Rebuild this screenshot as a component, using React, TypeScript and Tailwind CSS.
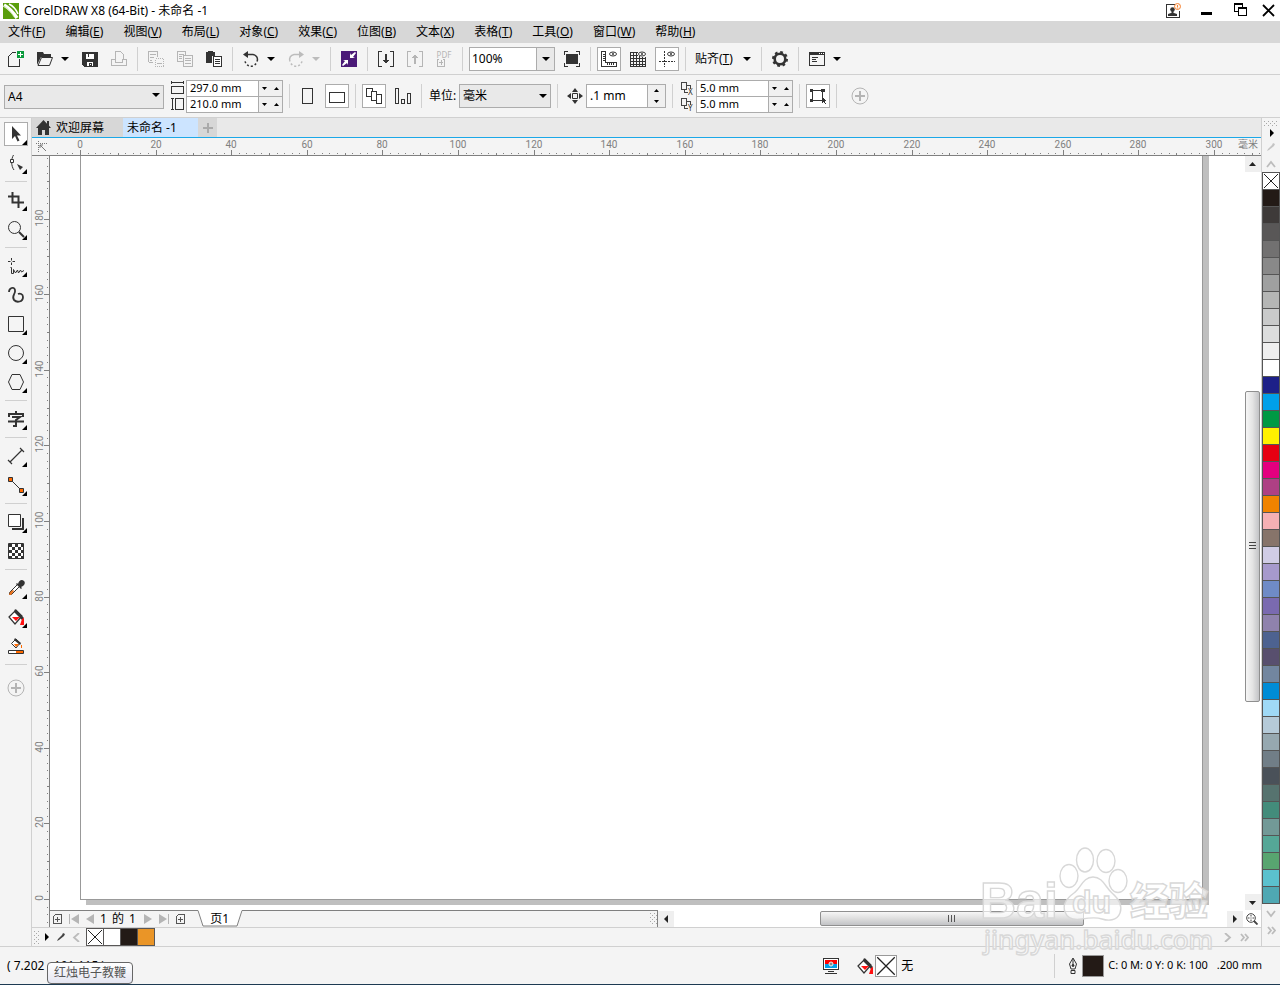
import React, { useState } from 'react';

const PALETTE = [
  '#231a16', '#3e3a39', '#595757', '#727171', '#898989', '#9fa0a0', '#b5b6b5', '#c9caca', '#dcdddd', '#efefef',
  '#ffffff', '#1d2088', '#00a0e9', '#009944', '#fff100', '#e60012', '#e4007f', '#ae4084', '#f08300', '#f4b0b4',
  '#87746a', '#d0cce5', '#a699cc', '#6f8bc6', '#7a6ab0', '#8f82ad', '#4d6290', '#584f6e', '#72869f', '#008cd6',
  '#9fd9f6', '#b5cad8', '#96a8b0', '#717e87', '#4a5159', '#56736f', '#438c7b', '#729997', '#55a797', '#58a570',
  '#5bc1ce', '#4fa8b3',
];

const MENUS: [string, string][] = [
  ['文件', 'F'], ['编辑', 'E'], ['视图', 'V'], ['布局', 'L'], ['对象', 'C'], ['效果', 'C'],
  ['位图', 'B'], ['文本', 'X'], ['表格', 'T'], ['工具', 'O'], ['窗口', 'W'], ['帮助', 'H'],
];

const PX_PER_MM = 3.78;

interface IconProps {
  children: React.ReactNode;
  size?: number;
  crisp?: boolean;
}

function Icon({ children, size = 16, crisp = true }: IconProps) {
  return (
    <svg
      width={size}
      height={size}
      viewBox={`0 0 ${size} ${size}`}
      fill="none"
      stroke="#333"
      shapeRendering={crisp ? 'crispEdges' : 'auto'}
      className="shrink-0"
    >
      {children}
    </svg>
  );
}

interface ToolButtonProps {
  label: string;
  active?: boolean;
  disabled?: boolean;
  children: React.ReactNode;
}

function ToolButton({ label, active, disabled, children }: ToolButtonProps) {
  return (
    <button
      type="button"
      aria-label={label}
      disabled={disabled}
      className={`flex h-6 w-6 shrink-0 items-center justify-center ${active ? 'border border-[#acacac] bg-white' : ''}`}
    >
      {children}
    </button>
  );
}

function Caret({ color = '#000' }: { color?: string }) {
  return (
    <svg width="8" height="4" viewBox="0 0 8 4" className="shrink-0">
      <path d="M0 0h8L4 4z" fill={color} />
    </svg>
  );
}

function CaretButton({ label, color }: { label: string; color?: string }) {
  return (
    <button type="button" aria-label={label} className="-ml-[5px] flex h-6 w-4 shrink-0 items-center justify-center">
      <Caret color={color} />
    </button>
  );
}

function Divider() {
  return (
    <div className="flex h-6 w-[3px] shrink-0 justify-center">
      <div className="h-6 w-px bg-[#d0d0d0]" />
    </div>
  );
}

function Combo({ label, value, className }: { label: string; value: string; className: string }) {
  return (
    <div className={`relative shrink-0 ${className}`}>
      <select
        aria-label={label}
        className="h-6 w-full appearance-none border border-[#acacac] bg-[#e9e9e9] pl-[3px] text-xs leading-5 outline-none"
      >
        <option>{value}</option>
      </select>
      <span className="pointer-events-none absolute top-[10px] right-1">
        <Caret />
      </span>
    </div>
  );
}

function SmallTriangle({ up }: { up?: boolean }) {
  return (
    <svg width="5" height="3" viewBox="0 0 5 3">
      <path d={up ? 'M0 3h5L2.500 0z' : 'M0 0h5L2.500 3z'} fill="#000" />
    </svg>
  );
}

function SpinRow({ label, value, last }: { label: string; value: string; last?: boolean }) {
  return (
    <div className={`flex h-[17px] w-[97px] border border-[#acacac] ${last ? '-mt-px' : ''}`}>
      <input aria-label={label} defaultValue={value} className="w-[71px] bg-white pl-[3px] text-[11px] outline-none" />
      <div className="flex flex-1 items-center justify-around border-l border-[#acacac] bg-[#f0f0f0]">
        <button type="button" aria-label={`${label} -`}>
          <SmallTriangle />
        </button>
        <button type="button" aria-label={`${label} +`}>
          <SmallTriangle up />
        </button>
      </div>
    </div>
  );
}

function TitleBar() {
  return (
    <header className="flex h-[21px] items-center bg-white pr-[5px] pl-[3px]">
      <svg width="16" height="16" viewBox="0 0 16 16" fill="none">
        <rect width="16" height="16" fill="#5a9e0c" />
        <path d="M1 2C6 5 10 9 14 15" stroke="#fff" strokeWidth="3.500" />
        <path d="M6 1c4 2 7 5 9 10" stroke="#fff" strokeWidth="1.600" />
        <path d="M1 3c4 3 7 6 10 11" stroke="#b9dc92" strokeWidth=".8" />
      </svg>
      <h1 className="ml-[5px] flex-1 text-xs">CorelDRAW X8 (64-Bit) - 未命名 -1</h1>
      <button type="button" aria-label="登录" className="mr-4">
        <svg width="16" height="16" viewBox="0 0 16 16">
          <path d="M10 1.500H1.500v13h13V8" fill="#fff" stroke="#333" shapeRendering="crispEdges" />
          <circle cx="7.500" cy="6.500" r="2.300" fill="#333" />
          <path d="M6.500 8h2v3h-2zM3 13v-2l3-1h3l3 1v2z" fill="#333" />
          <circle cx="12.500" cy="3.500" r="3" fill="#fff3e8" stroke="#f58233" />
          <path d="M12.500 2v2M12.500 4.500v1" stroke="#f58233" />
        </svg>
      </button>
      <button type="button" aria-label="最小化" className="mr-5">
        <Icon>
          <path d="M4 9h11v3H4z" fill="#000" stroke="none" />
        </Icon>
      </button>
      <button type="button" aria-label="还原" className="mr-[13px]">
        <Icon>
          <path d="M5 8.500H1.500v-8h8V4M1 1.500h9" stroke="#000" />
          <path d="M5.500 4.500h8v8h-8zM5 5.500h9" stroke="#000" />
        </Icon>
      </button>
      <button type="button" aria-label="关闭">
        <svg width="13" height="16" viewBox="0 0 13 16" fill="none" stroke="#000" strokeWidth="1.800">
          <path d="M1 2l11 11M12 2L1 13" />
        </svg>
      </button>
    </header>
  );
}

function MenuBar() {
  return (
    <nav className="flex h-[22px] items-center gap-5 bg-[#d7d7d7] pl-2">
      {MENUS.map(([name, key]) => (
        <button key={name} type="button" className="text-xs whitespace-nowrap">
          {name}(<u>{key}</u>)
        </button>
      ))}
    </nav>
  );
}

function Eye() {
  return (
    <g shapeRendering="auto">
      <ellipse cx="12" cy="3" rx="3.500" ry="2" fill="#fff" />
      <circle cx="12" cy="3" r="1" fill="#333" stroke="none" />
    </g>
  );
}

function StandardBar() {
  return (
    <div className="flex h-8 items-center gap-[5px] border-b border-[#d0d0d0] pl-1">
      <ToolButton label="新建">
        <Icon>
          <path d="M8 1.500H4.500L.5 5.500v10h11V8" />
          <path d="M9 0h7v7H9z" fill="#0a9a3c" stroke="none" />
          <path d="M10 3.500h5M12.500 1v5" stroke="#fff" />
        </Icon>
      </ToolButton>
      <ToolButton label="打开">
        <Icon crisp={false}>
          <path d="M0 14V1h6l1 2h7v3H4z" fill="#333" stroke="none" />
          <path d="M4.500 6.500h11l-3 8H1z" fill="#f4f4f4" />
        </Icon>
      </ToolButton>
      <CaretButton label="最近打开" />
      <ToolButton label="保存">
        <Icon>
          <path d="M0 1h16v15H2l-2-2z" fill="#333" stroke="none" />
          <path d="M4 3h8v5H4zM5 11h6v4H5z" fill="#fff" stroke="none" />
          <path d="M6.500 3v3M7 12h2v2H7z" />
        </Icon>
      </ToolButton>
      <ToolButton label="打印" disabled>
        <Icon>
          <path d="M4.500 9V.5h5l3 3V9M.5 8.500h4v3h7v-3h4v6H.5z" stroke="#b5b5b5" />
        </Icon>
      </ToolButton>
      <Divider />
      <ToolButton label="剪切" disabled>
        <Icon>
          <path d="M.5 11V.5h9V6M.5 11.500h4M2 3.500h6M2 6.500h4M2 9.500h2" stroke="#b5b5b5" />
          <path d="M7.500 7.500h8v8h-8z" stroke="#b5b5b5" strokeDasharray="1 1" />
          <path d="M9 12.500h5" stroke="#b5b5b5" />
        </Icon>
      </ToolButton>
      <ToolButton label="复制" disabled>
        <Icon>
          <path d="M6 10.500H.5V.5h8V4M2 3.500h5M2 5.500h3M2 7.500h3" stroke="#b5b5b5" />
          <path d="M6.500 4.500h9v11h-9zM8 7.500h6M8 9.500h6M8 12.500h6" stroke="#b5b5b5" />
        </Icon>
      </ToolButton>
      <ToolButton label="粘贴">
        <Icon>
          <path d="M0 1h2V0h5v1h2v4H6v7H0z" fill="#333" stroke="none" />
          <path d="M7.500 5.500h8v10h-8z" fill="#fff" />
          <path d="M9 8.500h5M9 10.500h5M9 12.500h5" />
        </Icon>
      </ToolButton>
      <Divider />
      <ToolButton label="撤消">
        <Icon crisp={false}>
          <path d="M4 3.500h6a5 5 0 0 1 4 7" strokeWidth="1.500" />
          <path d="M13 12.500a6 6 0 0 1-11-3" strokeDasharray="2 2" strokeWidth="1.500" />
          <path d="M0 3.500L5 0v7z" fill="#333" stroke="none" />
        </Icon>
      </ToolButton>
      <CaretButton label="撤消列表" />
      <ToolButton label="重做" disabled>
        <Icon crisp={false}>
          <path d="M12 3.500H6a5 5 0 0 0-4 7" stroke="#bcbcbc" strokeWidth="1.500" />
          <path d="M3 12.500a6 6 0 0 0 11-3" stroke="#bcbcbc" strokeDasharray="2 2" strokeWidth="1.500" />
          <path d="M16 3.500L11 0v7z" fill="#bcbcbc" stroke="none" />
        </Icon>
      </ToolButton>
      <CaretButton label="重做列表" color="#bcbcbc" />
      <Divider />
      <ToolButton label="搜索内容">
        <Icon crisp={false}>
          <path d="M0 0h16v16H0z" fill="#4b1a78" stroke="none" />
          <path d="M9 2v5h5l-2-1 3-4-1-1-4 3zM7 14V9H2l2 1-3 4 1 1 4-3z" fill="#fff" stroke="none" />
        </Icon>
      </ToolButton>
      <Divider />
      <ToolButton label="导入">
        <Icon>
          <path d="M4 .5H.5v15H4M12 .5h3.500v15H12" />
          <path d="M7 3h2v6h2l-3 4-3-4h2z" fill="#333" stroke="none" />
        </Icon>
      </ToolButton>
      <ToolButton label="导出" disabled>
        <Icon>
          <path d="M4 .5H.5v15H4M12 .5h3.500v15H12" stroke="#b5b5b5" />
          <path d="M7 13h2V7h2L8 3 5 7h2z" fill="#b5b5b5" stroke="none" />
        </Icon>
      </ToolButton>
      <ToolButton label="发布为 PDF" disabled>
        <span className="flex flex-col items-start text-[#b5b5b5]">
          <span className="text-[8px] leading-[8px]">PDF</span>
          <svg width="8" height="8" viewBox="0 0 8 8" fill="none" stroke="#b5b5b5" shapeRendering="crispEdges">
            <path d="M2 .5H.5v7h7v-7H6M4 1v5M2 3.500h4" />
          </svg>
        </span>
      </ToolButton>
      <Divider />
      <div className="flex h-6 w-[86px] shrink-0 border border-[#acacac] bg-white">
        <input aria-label="缩放级别" defaultValue="100%" className="w-[66px] pl-[2px] text-xs outline-none" />
        <button
          type="button"
          aria-label="缩放列表"
          className="flex flex-1 items-center justify-center border-l border-[#acacac] bg-[#e9e9e9]"
        >
          <Caret />
        </button>
      </div>
      <ToolButton label="全屏预览">
        <Icon>
          <path d="M2 3h12v10H2z" fill="#333" stroke="none" />
          <path d="M.5 4V.5H4M12 .5h3.500V4M15.500 12v3.500H12M4 15.500H.5V12" />
        </Icon>
      </ToolButton>
      <Divider />
      <ToolButton label="显示标尺" active>
        <Icon>
          <path d="M.5.5h4v11h11v4H.5zM2 3.500h2M2 5.500h2M2 7.500h2M2 9.500h2M6.500 12v2M8.500 12v2M10.500 12v2M12.500 12v2" />
          <Eye />
        </Icon>
      </ToolButton>
      <ToolButton label="显示网格">
        <Icon>
          <path d="M.5 1v14.500h15V6M3.500 1v14M6.500 1v14M9.500 5v10M12.500 6v9M0 1.500h8M0 4.500h8M0 7.500h16M0 10.500h16M0 13.500h16" />
          <Eye />
        </Icon>
      </ToolButton>
      <ToolButton label="显示辅助线" active>
        <Icon>
          <path d="M5.500 0v16M0 10.500h16" strokeDasharray="2 1" />
          <Eye />
        </Icon>
      </ToolButton>
      <Divider />
      <button type="button" className="h-6 w-[47px] shrink-0 pl-[3px] text-left text-xs whitespace-nowrap">
        贴齐(<u>T</u>)
      </button>
      <CaretButton label="贴齐列表" />
      <Divider />
      <ToolButton label="选项">
        <Icon crisp={false}>
          <circle cx="8" cy="8" r="5.300" strokeWidth="2.600" />
          <circle cx="8" cy="8" r="7" strokeWidth="2" strokeDasharray="2.750 2.750" />
        </Icon>
      </ToolButton>
      <Divider />
      <ToolButton label="应用程序启动器">
        <Icon>
          <path d="M.5 1.500h15v13H.5z" />
          <path d="M0 1h16v3H0z" fill="#333" stroke="none" />
          <path d="M10 2.500h1M12 2.500h1M14 2.500h1" stroke="#fff" />
          <path d="M3 6.500h6M3 8.500h4M3 10.500h5" />
        </Icon>
      </ToolButton>
      <CaretButton label="启动器列表" />
    </div>
  );
}

function DuplicateIcon({ axis }: { axis: string }) {
  return (
    <svg width="15" height="16" viewBox="0 0 15 16" fill="none" stroke="#444" shapeRendering="crispEdges">
      <path d="M2.500 2.500h5v7h-5zM8 5.500h3v3M5.500 10v2.500h3" />
      <text x="9" y="15" fontSize="8" fill="#333" stroke="none">
        {axis}
      </text>
    </svg>
  );
}

function PropertyBar() {
  return (
    <div className="flex h-[43px] items-center gap-[5px] border-b border-[#d0d0d0] pl-1">
      <Combo label="页面大小" value="A4" className="w-40" />
      <div className="flex shrink-0 items-center">
        <div className="flex w-[17px] flex-col">
          <Icon>
            <path d="M2 2.500h13M2.500 1v3M14.500 1v3M2.500 6.500h12v7h-12z" />
          </Icon>
          <Icon>
            <path d="M3.500 2v12M2 2.500h3M2 13.500h3M6.500 2.500h8v11h-8z" />
          </Icon>
        </div>
        <div>
          <SpinRow label="页面宽度" value="297.0 mm" />
          <SpinRow label="页面高度" value="210.0 mm" last />
        </div>
      </div>
      <Divider />
      <ToolButton label="纵向">
        <Icon>
          <path d="M2.500.5h10v15h-10z" />
        </Icon>
      </ToolButton>
      <ToolButton label="横向" active>
        <Icon>
          <path d="M.5 4.500h15v10H.5z" />
        </Icon>
      </ToolButton>
      <Divider />
      <ToolButton label="所有页面" active>
        <Icon>
          <path d="M.5.500h6v8h-6z" fill="#fff" />
          <path d="M5.500 3.500h5v9h-5z" fill="#fff" />
          <path d="M10.500 6.500h5v9h-5z" fill="#fff" />
        </Icon>
      </ToolButton>
      <ToolButton label="当前页">
        <Icon>
          <path d="M.5.500h3v15h-3zM6.500 11.500h3v4h-3zM12.500 5.500h3v10h-3z" />
        </Icon>
      </ToolButton>
      <Divider />
      <label className="flex shrink-0 items-center text-xs">
        <span className="w-[31px] pl-px whitespace-nowrap">单位:</span>
        <Combo label="单位" value="毫米" className="w-[92px]" />
      </label>
      <Divider />
      <div className="flex shrink-0 items-center">
        <span className="flex w-[22px] justify-center">
          <Icon crisp={false}>
            <path d="M5.500 5.500h5v5h-5z" />
            <path d="M8 0l3 4H5zM8 16l3-4H5zM0 8l4-3v6zM16 8l-4-3v6z" fill="#333" stroke="none" />
          </Icon>
        </span>
        <div className="flex h-6 w-20 border border-[#acacac] bg-white">
          <input aria-label="微调距离" defaultValue=".1 mm" className="w-[60px] pl-[3px] text-xs outline-none" />
          <div className="flex flex-1 flex-col items-center justify-around border-l border-[#acacac] bg-[#f0f0f0]">
            <button type="button" aria-label="增加" className="flex">
              <SmallTriangle up />
            </button>
            <button type="button" aria-label="减少" className="flex">
              <SmallTriangle />
            </button>
          </div>
        </div>
      </div>
      <Divider />
      <div className="flex shrink-0 items-center">
        <div className="flex w-[17px] flex-col">
          <DuplicateIcon axis="X" />
          <DuplicateIcon axis="Y" />
        </div>
        <div>
          <SpinRow label="再制距离 X" value="5.0 mm" />
          <SpinRow label="再制距离 Y" value="5.0 mm" last />
        </div>
      </div>
      <Divider />
      <ToolButton label="视为已填充" active>
        <Icon>
          <path d="M2.500 2.500h10v10h-10z" />
          <path d="M0 1h3v3H0zM11 1h4v3h-4zM0 11h3v3H0z" fill="#333" stroke="none" />
          <path d="M12 8v7l2-1 1 2h1l-1-3h1z" fill="#333" stroke="none" />
        </Icon>
      </ToolButton>
      <Divider />
      <div className="ml-[5px]">
        <ToolButton label="快速自定义">
          <AddIcon />
        </ToolButton>
      </div>
    </div>
  );
}

function AddIcon() {
  return (
    <svg width="18" height="18" viewBox="0 0 18 18" fill="none" stroke="#b4b4b4">
      <circle cx="9" cy="9" r="8" />
      <path d="M4 9h10M9 4v10" strokeWidth="2" />
    </svg>
  );
}

interface ToolProps {
  label: string;
  active?: boolean;
  flyout?: boolean;
  children: React.ReactNode;
}

function Tool({ label, active, flyout, children }: ToolProps) {
  return (
    <button
      type="button"
      aria-label={label}
      className={`flex h-6 w-6 items-center justify-center ${active ? 'bg-white outline outline-1 -outline-offset-1 outline-[#acacac]' : ''}`}
    >
      <svg width="24" height="24" viewBox="0 0 24 24" fill="none" stroke="#333">
        <g transform="translate(4 4)">{children}</g>
        {flyout && <path d="M23 18v5h-5z" fill="#000" stroke="none" />}
      </svg>
    </button>
  );
}

function ToolDivider() {
  return (
    <div className="flex h-[3px] w-[22px] items-center">
      <div className="h-px w-full bg-[#d0d0d0]" />
    </div>
  );
}

function Toolbox() {
  return (
    <aside className="flex w-8 shrink-0 flex-col items-center gap-[5px] border-r border-[#d0d0d0] pt-1">
      <Tool label="选择" active flyout>
        <path d="M4 0v13l3-3 2.500 5.500 2-1L9 9.500h4z" fill="#333" stroke="none" />
      </Tool>
      <Tool label="形状" flyout>
        <path d="M5.500 0C3 4 3 11 6 15" />
        <path d="M2.500 4.500h3v3h-3z" fill="#fff" />
        <path d="M9 9l6 3-3 3z" fill="#333" stroke="none" />
      </Tool>
      <ToolDivider />
      <Tool label="裁剪" flyout>
        <path d="M0 4.500h10.500V16M4.500 0v10.500H16" strokeWidth="2" />
      </Tool>
      <Tool label="缩放" flyout>
        <circle cx="6.500" cy="6.500" r="6" />
        <path d="M11 11l5 5" strokeWidth="2" />
      </Tool>
      <ToolDivider />
      <Tool label="手绘" flyout>
        <path d="M3.500 0v2.500M3.500 4.500V7M0 3.500h2.500M4.500 3.500H7" />
        <path d="M2.500 9.500h1v6h2v-4l2 3.500 2-3 1 3 2-3 1 2 2.500-1.500" />
      </Tool>
      <Tool label="艺术笔">
        <path d="M1 5C1 1 6-1 7 3s-4 6-1 10c3 3 9 2 9-3 0-3-3-4-5-3" strokeWidth="1.800" />
      </Tool>
      <Tool label="矩形" flyout>
        <path d="M.5.500h15v15H.5z" />
      </Tool>
      <Tool label="椭圆形" flyout>
        <circle cx="8" cy="8" r="7.500" />
      </Tool>
      <Tool label="多边形" flyout>
        <path d="M4 .5h8l3.500 7.500-3.500 7.500H4L.5 8z" />
      </Tool>
      <ToolDivider />
      <Tool label="文本" flyout>
        <path d="M8 0v3M1 6V3h14v3M4 6h8L8 9v6H5M0 10.500h16" strokeWidth="2" />
      </Tool>
      <ToolDivider />
      <Tool label="平行度量" flyout>
        <path d="M2 14L14 2M0 12l4 4M12 0l4 4" strokeWidth="1.200" />
      </Tool>
      <Tool label="直线连接器" flyout>
        <path d="M3 3l10 10" />
        <path d="M.5.500h4v4h-4zM11.500 11.500h4v4h-4z" fill="#ff6a00" />
      </Tool>
      <ToolDivider />
      <Tool label="阴影" flyout>
        <path d="M4 15h11V4" strokeWidth="2" />
        <path d="M.5.500h12v12H.5z" fill="#fff" />
      </Tool>
      <Tool label="透明度">
        <path d="M.5.500h15v15H.5z" fill="#fff" />
        {[0, 1, 2, 3, 4].map((row) => (
          <path key={row} d={`M${row % 2 ? 4 : 1} ${row * 3 + 2.5}h15`} strokeWidth="3" strokeDasharray="3 3" />
        ))}
        <path d="M17 0v16" stroke="#f4f4f4" strokeWidth="2" />
        <path d="M19 0v16" stroke="#f4f4f4" strokeWidth="2" />
      </Tool>
      <ToolDivider />
      <Tool label="颜色滴管" flyout>
        <path d="M10 4L1.500 12.500v2h2L12 6" fill="#fff" />
        <path d="M2 12l3-2 1 1-3 4H1z" fill="#e8701a" stroke="none" />
        <path d="M8 4l1-1 1 1c1-4 4-5 6-3s0 5-3 6l1 1-1 1z" fill="#333" stroke="none" />
      </Tool>
      <Tool label="交互式填充" flyout>
        <path d="M1 8l7-7 6 6-7 8z" fill="#fff" strokeWidth="1.200" />
        <path d="M7 0l9 9-2 2-8-8z" fill="#333" stroke="none" />
        <path d="M4 8h8l-4 4zM14 10l2-1v7l-4 0z" fill="#ff1010" stroke="none" />
      </Tool>
      <Tool label="智能填充">
        <path d="M3.500 5.500L8 1l4 4-4 5z" fill="#fff" />
        <path d="M7 0l6 5-1 2-6-5z" fill="#333" stroke="none" />
        <path d="M6 6h5L8 9zM13 7h1v3h-1z" fill="#ff6a00" stroke="none" />
        <path d="M.5 12.500h15v3H.5z" fill="#fff" />
        <path d="M8 13h7v2H8z" fill="#ff6a00" stroke="none" />
      </Tool>
      <ToolDivider />
      <div className="mt-[5px]">
        <ToolButton label="快速自定义工具箱">
          <AddIcon />
        </ToolButton>
      </div>
    </aside>
  );
}

function tickLength(mm: number) {
  if (mm % 20 === 0) return 5;
  return mm % 10 === 0 ? 2 : 1;
}

function HorizontalRuler() {
  const ticks = Array.from({ length: 160 }, (_, i) => i * 2 - 6);
  return (
    <svg className="h-[17px] min-w-0 flex-1 overflow-hidden font-['Roboto']" fontSize="10" fill="#808080">
      {ticks.map((mm) => {
        const x = Math.round(30 + mm * PX_PER_MM);
        const len = tickLength(mm);
        return <rect key={mm} x={x} y={len === 1 ? 15 : 17 - len} width="1" height={len} />;
      })}
      {ticks
        .filter((mm) => mm % 20 === 0 && mm <= 300)
        .map((mm) => (
          <text key={mm} x={Math.round(30 + mm * PX_PER_MM)} y="10" textAnchor="middle">
            {mm}
          </text>
        ))}
      <text x="1188" y="10" className="font-['Noto_Sans_CJK_SC',sans-serif]">
        毫米
      </text>
    </svg>
  );
}

function VerticalRuler() {
  const ticks = Array.from({ length: 103 }, (_, i) => i * 2 - 6);
  return (
    <div className="relative w-[18px] shrink-0 overflow-hidden border-r border-[#808080]">
      <svg className="absolute h-full w-full font-['Roboto']" fontSize="10" fill="#808080">
        {ticks.map((mm) => {
          const y = Math.round(743 - mm * PX_PER_MM);
          const len = tickLength(mm);
          return <rect key={mm} x={len === 1 ? 15 : 17 - len} y={y} width={len} height="1" />;
        })}
        {ticks
          .filter((mm) => mm % 20 === 0 && mm >= 0 && mm < 200)
          .map((mm) => {
            const y = Math.round(742 - mm * PX_PER_MM);
            return (
              <text key={mm} transform={`translate(11 ${y}) rotate(-90)`} textAnchor="middle">
                {mm}
              </text>
            );
          })}
      </svg>
    </div>
  );
}

function ScrollArrow({ label, d }: { label: string; d: string }) {
  return (
    <button type="button" aria-label={label} className="flex h-4 w-4 shrink-0 items-center justify-center bg-[#efefef]">
      <svg width="8" height="8" viewBox="0 0 8 8">
        <path d={d} fill="#222" />
      </svg>
    </button>
  );
}

function VerticalScrollbar() {
  return (
    <div className="flex w-4 shrink-0 flex-col">
      <ScrollArrow label="向上滚动" d="M0 6h7L3.500 2z" />
      <div className="flex-[219]" />
      <div className="flex w-[15px] flex-[310] items-center justify-center rounded-xs border border-[#8f8f8f] bg-linear-to-r from-[#f6f6f6] via-[#e4e4e4] to-[#c2c3c6]">
        <svg width="8" height="8" viewBox="0 0 8 8" stroke="#444" shapeRendering="crispEdges">
          <path d="M0 .5h7M0 3.500h7M0 6.500h7" />
        </svg>
      </div>
      <div className="flex-[192]" />
      <ScrollArrow label="向下滚动" d="M0 3h7L3.500 7z" />
    </div>
  );
}

function PageIcon() {
  return (
    <svg width="9" height="10" viewBox="0 0 9 10" fill="none" stroke="#555" shapeRendering="crispEdges">
      <path d="M.5 2.500l2-2h6v9h-8zM2 5.500h5M4.500 3v5" />
    </svg>
  );
}

function NavTriangle({ d, width = 8 }: { d: string; width?: number }) {
  return (
    <svg width={width} height="10" viewBox={`0 0 ${width} 10`}>
      <path d={d} fill="#b5b5b5" />
    </svg>
  );
}

function Grip({ className }: { className: string }) {
  return (
    <svg className={className}>
      <defs>
        <pattern id="grip" width="4" height="4" patternUnits="userSpaceOnUse">
          <path d="M0 0h1v1H0zM2 2h1v1H2z" fill="#a8a8a8" />
        </pattern>
      </defs>
      <rect width="100%" height="100%" fill="url(#grip)" />
    </svg>
  );
}

function PageBar() {
  return (
    <div className="flex h-[17px] shrink-0 bg-white">
      <div className="flex flex-[606] items-center border-t border-r border-[#808080] bg-[#f4f4f4] pl-[3px]">
        <button type="button" aria-label="在前面添加页">
          <PageIcon />
        </button>
        <button type="button" aria-label="第一页" className="ml-[7px]">
          <NavTriangle width={10} d="M0 0h1v10H0zM10 0v10L2 5z" />
        </button>
        <button type="button" aria-label="上一页" className="ml-[7px]">
          <NavTriangle d="M8 0v10L0 5z" />
        </button>
        <span className="ml-[6px] flex gap-[5px] text-xs leading-4">
          <span>1</span>
          <span>的</span>
          <span>1</span>
        </span>
        <button type="button" aria-label="下一页" className="ml-2">
          <NavTriangle d="M0 0v10l8-5z" />
        </button>
        <button type="button" aria-label="最后一页" className="ml-[7px]">
          <NavTriangle width={10} d="M9 0h1v10H9zM0 0v10l8-5z" />
        </button>
        <button type="button" aria-label="在后面添加页" className="ml-[7px]">
          <PageIcon />
        </button>
        <button type="button" className="relative -mt-px ml-3 h-[17px] w-[46px] text-xs leading-4">
          <svg width="46" height="17" viewBox="0 0 46 17" className="absolute inset-0">
            <path d="M0 0l6 16h34l6-16z" fill="#fff" />
            <path d="M0 .5h1l5 15.500h34l5-15.500h1" fill="none" stroke="#808080" />
          </svg>
          <span className="relative">页1</span>
        </button>
        <Grip className="ml-auto h-3 w-[7px]" />
      </div>
      <div className="flex flex-[587] items-center">
        <ScrollArrow label="向左滚动" d="M6 0v8L2 4z" />
        <div className="flex-[147]" />
        <div className="flex h-[15px] flex-[263] items-center justify-center rounded-xs border border-[#8f8f8f] bg-linear-to-b from-[#f6f6f6] via-[#dedede] to-[#c2c3c6]">
          <svg width="8" height="7" viewBox="0 0 8 7" stroke="#555" shapeRendering="crispEdges">
            <path d="M.5 0v7M3.500 0v7M6.500 0v7" />
          </svg>
        </div>
        <div className="flex-[144]" />
        <ScrollArrow label="向右滚动" d="M2 0v8l4-4z" />
      </div>
      <button type="button" aria-label="导航器" className="flex w-[18px] shrink-0 items-center justify-center">
        <svg width="12" height="12" viewBox="0 0 12 12" fill="none" stroke="#444">
          <circle cx="5" cy="5" r="4.300" />
          <path d="M5 2v1.500M5 6.500V8M2 5h1.500M6.500 5H8M4.500 5h1" />
          <path d="M8 8l3.500 3.500" strokeWidth="1.800" />
        </svg>
      </button>
    </div>
  );
}

function Pencil({ color }: { color: string }) {
  return (
    <svg width="10" height="10" viewBox="0 0 10 10">
      <path d="M1 9l1-2 4-4 1-2 2 1-1 2-5 4z" fill={color} />
    </svg>
  );
}

function Chevron({ d, width = 8 }: { d: string; width?: number }) {
  return (
    <svg width={width} height="9" viewBox={`0 0 ${width} 9`} fill="none" stroke="#bcbcbc" strokeWidth="1.800">
      <path d={d} />
    </svg>
  );
}

function EmptySwatch({ size }: { size: number }) {
  return (
    <svg width={size} height={size} viewBox="0 0 16 16" stroke="#222" strokeWidth="1" className="block bg-white">
      <path d="M1 1l14 14M15 1L1 15" />
    </svg>
  );
}

function DocumentPalette() {
  return (
    <div className="flex h-[19px] shrink-0 items-center border-t border-[#d0d0d0] pl-[2px]">
      <Grip className="h-[13px] w-[5px]" />
      <button type="button" aria-label="文档调色板菜单" className="ml-[5px]">
        <svg width="5" height="8" viewBox="0 0 5 8">
          <path d="M1 0l4 4-4 4z" />
        </svg>
      </button>
      <button type="button" aria-label="拾取颜色" className="ml-[7px]">
        <Pencil color="#444" />
      </button>
      <button type="button" aria-label="向前" className="ml-[6px]">
        <Chevron d="M7 0L2 4.500 7 9" />
      </button>
      <ul className="ml-[6px] flex h-[18px] border-r border-y border-[#595757]">
        <li className="h-4 w-[17px] border-l border-[#595757]">
          <button type="button" aria-label="无颜色" className="block h-4 w-4">
            <EmptySwatch size={16} />
          </button>
        </li>
        {['#ffffff', '#231a16', '#ea9527'].map((color) => (
          <li key={color} className="h-4 w-[17px] border-l border-[#595757]">
            <button type="button" aria-label={color} className="block h-4 w-4" style={{ backgroundColor: color }} />
          </li>
        ))}
      </ul>
      <button type="button" aria-label="向后" className="ml-auto">
        <Chevron d="M1 0l5 4.500L1 9" />
      </button>
      <button type="button" aria-label="更多" className="mr-3 ml-2">
        <Chevron width={9} d="M1 1l3 3.500L1 8M5 1l3 3.500L5 8" />
      </button>
    </div>
  );
}

function ColorPalette() {
  const [selected, setSelected] = useState<string>('#231a16');

  return (
    <aside className="flex w-[19px] shrink-0 flex-col items-center border-l border-[#d0d0d0]">
      <div className="flex h-[10px] items-center">
        <Grip className="h-[5px] w-[14px]" />
      </div>
      <button type="button" aria-label="调色板菜单" className="flex h-[10px] items-center">
        <svg width="5" height="8" viewBox="0 0 5 8">
          <path d="M1 0l4 4-4 4z" />
        </svg>
      </button>
      <button type="button" aria-label="拾取颜色" className="flex h-[18px] items-center">
        <Pencil color="#c4c4c4" />
      </button>
      <button type="button" aria-label="向上" className="flex h-4 items-center">
        <Chevron width={10} d="M1 7l4-5 4 5" />
      </button>
      <ul className="w-[18px] border-x border-b border-[#555]">
        <li className="h-[17px] border-t border-[#555]">
          <button type="button" aria-label="无颜色" className="block h-4 w-4">
            <EmptySwatch size={16} />
          </button>
        </li>
        {PALETTE.map((color) => (
          <li key={color} className="h-[17px] border-t border-[#555]">
            <button
              type="button"
              aria-label={color}
              aria-pressed={selected === color}
              onClick={() => setSelected(color)}
              className="block h-4 w-full"
              style={{ backgroundColor: color }}
            />
          </li>
        ))}
      </ul>
      <button type="button" aria-label="向下" className="flex h-[18px] items-center">
        <Chevron width={10} d="M1 2l4 5 4-5" />
      </button>
      <button type="button" aria-label="更多" className="flex h-4 items-center">
        <Chevron width={9} d="M1 1l3 3.500L1 8M5 1l3 3.500L5 8" />
      </button>
    </aside>
  );
}

function Workspace() {
  return (
    <main className="flex min-w-0 flex-1 flex-col">
      <div className="flex h-5 shrink-0 border-b border-[#1ba8e8] bg-[#e9e9e9] text-xs">
        <button type="button" className="flex w-[91px] items-center gap-[5px] bg-[#d7d7d7] pl-1">
          <svg width="15" height="15" viewBox="0 0 15 15">
            <path d="M7.500 0L0 8h2v7h4v-5h3v5h4V8h2l-2-2.200V1h-2v2.700z" fill="#333" />
          </svg>
          欢迎屏幕
        </button>
        <button type="button" className="w-[75px] bg-[#cce4ff] pl-1 text-left">
          未命名 -1
        </button>
        <button type="button" aria-label="新建文档" className="flex w-[19px] items-center justify-center bg-[#d7d7d7]">
          <Icon size={12}>
            <path d="M1 6h10M6 1v10" stroke="#aaa" strokeWidth="2" />
          </Icon>
        </button>
      </div>
      <div className="flex h-[18px] shrink-0 border-b border-[#808080]">
        <div className="flex w-[18px] items-center justify-center">
          <svg width="11" height="11" viewBox="0 0 11 11" fill="none" stroke="#777">
            <path d="M0 2.500h11M2.500 0v11" strokeDasharray="1 1" shapeRendering="crispEdges" />
            <path d="M4 4l6 6M4 7V4h3" />
          </svg>
        </div>
        <HorizontalRuler />
      </div>
      <div className="flex flex-1">
        <VerticalRuler />
        <div className="flex min-w-0 flex-1 flex-col">
          <div className="flex flex-1 bg-white">
            <div className="flex flex-1 overflow-hidden pr-[42px] pb-[10px] pl-[30px]">
              <div className="-mt-2 flex-1 border border-[#999] bg-white shadow-[6px_5px_0_#bfbfbf]" />
            </div>
            <VerticalScrollbar />
          </div>
          <PageBar />
        </div>
      </div>
      <DocumentPalette />
    </main>
  );
}

function StatusBar() {
  return (
    <footer className="relative flex h-[39px] items-center border-t border-b border-t-[#d0d0d0] border-b-[#1d3a52] pr-[18px] pl-[7px] text-xs">
      <span className="flex-1">( 7.202 , 191.115 )</span>
      <div className="flex w-[230px] items-center">
        <Icon>
          <path d="M.5.500h15v11H.5z" fill="#fff" />
          <path d="M2 2h12v4H2z" fill="#f00" stroke="none" />
          <path d="M2 6h12v4H2z" fill="#00a0e9" stroke="none" />
          <circle cx="8" cy="6" r="2" fill="#888" stroke="#eee" shapeRendering="auto" />
          <path d="M5 13.500h6M2 15.500h12" />
        </Icon>
        <span className="ml-[18px] flex">
          <Icon crisp={false}>
            <path d="M1 8l7-7 6 6-7 8z" fill="#fff" strokeWidth="1.200" />
            <path d="M7 0l9 9-2 2-8-8z" fill="#333" stroke="none" />
            <path d="M4 8h8l-4 4zM14 10l2-1v7h-4z" fill="#ff1010" stroke="none" />
          </Icon>
        </span>
        <span className="ml-[2px] border border-[#999]">
          <EmptySwatch size={20} />
        </span>
        <span className="ml-1">无</span>
      </div>
      <Divider />
      <div className="ml-3 flex items-center">
        <svg width="10" height="16" viewBox="0 0 10 16" fill="none" stroke="#333">
          <path d="M5 0L1.500 6l1.500 5h4l1.500-5zM5 1v7M3 12.500h4v3H3z" />
          <circle cx="5" cy="7.500" r="1" fill="#333" />
        </svg>
        <span className="ml-1 h-[22px] w-[22px] border border-[#999] bg-[#231a16]" />
        <span className="ml-1 text-[11px] whitespace-nowrap">C: 0 M: 0 Y: 0 K: 100</span>
        <span className="ml-[9px] text-[11px] whitespace-nowrap">.200 mm</span>
      </div>
      <div className="absolute top-[15px] left-[47px] rounded-sm border border-[#666] bg-linear-to-b from-white to-[#e4e5f0] px-[6px] text-xs leading-5 text-[#555]">
        红烛电子教鞭
      </div>
    </footer>
  );
}

function Watermark() {
  return (
    <svg
      width="240"
      height="120"
      viewBox="0 0 240 120"
      className="pointer-events-none absolute right-[62px] bottom-[25px]"
      fill="#fff"
      fillOpacity=".65"
      stroke="#d8d8d8"
      strokeWidth="1.400"
    >
      <ellipse cx="91" cy="36" rx="9" ry="11.500" />
      <ellipse cx="107" cy="20" rx="8.500" ry="12" />
      <ellipse cx="128" cy="21" rx="9" ry="11.500" />
      <ellipse cx="140" cy="41" rx="9" ry="11.500" />
      <path d="M115 37c10 0 12 10 19 16s11 12 8 20-12 8-18 6-14-1-20 0-14 1-17-7 2-14 9-19 9-16 19-16z" />
      <text x="2" y="78" fontSize="50" fontWeight="700" className="font-['Liberation_Sans',sans-serif]">
        Bai
      </text>
      <text x="94" y="73" fontSize="32" fontWeight="700" className="font-['Liberation_Sans',sans-serif]">
        du
      </text>
      <text x="152" y="75" fontSize="39" fontWeight="900" className="font-['Noto_Sans_CJK_SC',sans-serif]">
        经验
      </text>
      <text x="6" y="109" fontSize="26" fontWeight="500" className="font-['Noto_Sans',sans-serif]">
        jingyan.baidu.com
      </text>
    </svg>
  );
}

export default function App() {
  return (
    <div className="relative flex min-h-screen flex-col overflow-hidden bg-[#f4f4f4] font-['Noto_Sans','Noto_Sans_CJK_SC',sans-serif] text-black">
      <TitleBar />
      <MenuBar />
      <StandardBar />
      <PropertyBar />
      <div className="flex flex-1">
        <Toolbox />
        <Workspace />
        <ColorPalette />
      </div>
      <StatusBar />
      <Watermark />
    </div>
  );
}
